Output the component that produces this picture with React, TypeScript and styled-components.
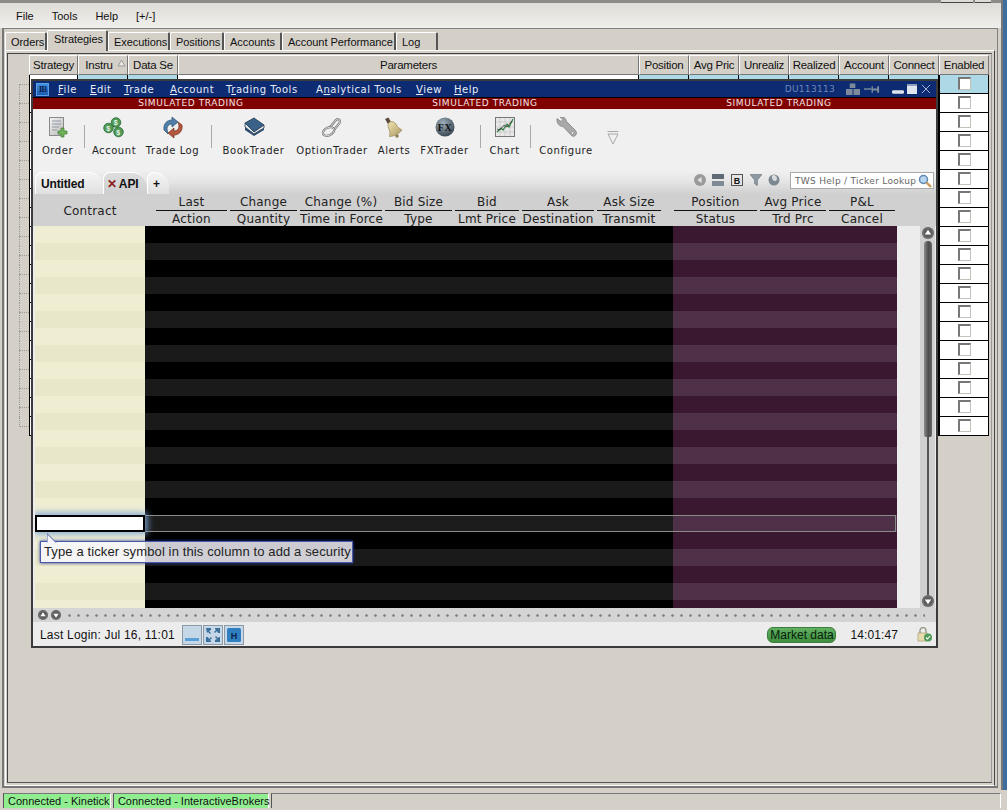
import React from "react";
import styled, { createGlobalStyle } from "styled-components";

const sans = `"Liberation Sans", Arial, sans-serif`;
const deja = `"DejaVu Sans", Verdana, sans-serif`;

const Global = createGlobalStyle`
  html, body { margin: 0; padding: 0; background: #d4d0c8; }
  * { box-sizing: border-box; }
`;

const Desktop = styled.div`
  position: relative;
  width: 1007px;
  height: 810px;
  overflow: hidden;
  display: flex;
  background: #d4d0c8;
  font-family: ${sans};
  font-size: 11px;
  color: #111;
`;
const Main = styled.div`
  width: 1001px;
  display: flex;
  flex-direction: column;
`;
const RightEdge = styled.div`
  width: 6px;
  height: 790px;
  border-left: 2px solid #77787a;
  background: #3f6d9e;
`;
const TopStrip = styled.div`
  height: 3px;
  background: #8d8b87;
  display: flex;
  justify-content: flex-end;
  gap: 2px;
  padding-right: 10px;
`;
const StripButton = styled.div<{ $w: number }>`
  width: ${(p) => p.$w}px;
  height: 3px;
  background: #dcdad4;
  border-bottom: 1px solid #444;
`;
const MenuBar = styled.div`
  height: 25px;
  display: flex;
  align-items: center;
  gap: 18px;
  padding-left: 16px;
  background: linear-gradient(#dedcd6, #f0efec);
  font-size: 11px;
`;
const Frame = styled.div`
  height: 760px;
  margin-left: 2px;
  width: 996px;
  border: 1px solid #808080;
  border-bottom: 2px solid #777;
  border-left: 2px solid #777;
  padding: 0 2px 0 1px;
  display: flex;
  flex-direction: column;
`;
const TabRow = styled.div`
  height: 21px;
  display: flex;
  align-items: flex-end;
  position: relative;
  z-index: 1;
`;
const Tab = styled.div<{ $w: number; $active?: boolean }>`
  width: ${(p) => p.$w}px;
  height: ${(p) => (p.$active ? 21 : 18)}px;
  margin-bottom: ${(p) => (p.$active ? -1 : 0)}px;
  padding: ${(p) => (p.$active ? "2px 0 0 6px" : "3px 0 0 5px")};
  background: #d4d0c8;
  border-top: 1px solid #fff;
  border-left: 1px solid #fff;
  border-right: 2px solid #555;
  border-radius: 2px 2px 0 0;
  font-size: 11px;
  letter-spacing: -0.05px;
  white-space: nowrap;
`;
const Panel = styled.div`
  flex: 1;
  border-top: 1px solid #fff;
  border-left: 1px solid #fff;
  border-right: 1px solid #444;
  border-bottom: 1px solid #fff;
  padding: 2px 2px 2px 1px;
  display: flex;
`;
const TablePane = styled.div`
  flex: 1;
  border: 1px solid #444;
  border-right-color: #999;
  border-bottom-color: #555;
  padding: 1px 0 0 0;
`;
const HeaderRow = styled.div`
  display: flex;
  height: 20px;
  padding-left: 21px;
`;
const HeadCell = styled.div<{ $w: number; $pr?: number }>`
  position: relative;
  width: ${(p) => p.$w}px;
  height: 20px;
  padding-right: ${(p) => p.$pr ?? 0}px;
  background: #d4d0c8;
  border-top: 1px solid #fff;
  border-left: 1px solid #fff;
  border-right: 1px solid #777;
  border-bottom: 1px solid #777;
  display: flex;
  align-items: center;
  justify-content: center;
  font-size: 11.5px;
  letter-spacing: -0.25px;
  white-space: nowrap;
`;
const SortMark = styled.svg`
  position: absolute;
  right: 1px;
  top: 3px;
`;
const TableRow = styled.div`
  display: flex;
  height: 19px;
`;
const TreeStub = styled.div<{ $first?: boolean; $last?: boolean }>`
  position: relative;
  width: 10px;
  margin-left: 11px;
  &::before {
    content: "";
    position: absolute;
    left: 0;
    top: ${(p) => (p.$first ? 9 : 0)}px;
    bottom: ${(p) => (p.$last ? 9 : 0)}px;
    border-left: 1px dotted #999;
  }
  &::after {
    content: "";
    position: absolute;
    left: 0;
    right: 0;
    top: 9px;
    border-top: 1px dotted #999;
  }
`;
const TableCell = styled.div<{ $w: number; $blue?: boolean }>`
  width: ${(p) => p.$w}px;
  height: 19px;
  background: ${(p) => (p.$blue ? "#add8e6" : "#fff")};
  border-right: 1px solid #000;
  border-bottom: 1px solid #000;
  &:nth-child(2) {
    border-left: 1px solid #000;
  }
`;
const EnabledCell = styled(TableCell)`
  display: flex;
  align-items: flex-start;
  justify-content: center;
  padding-top: 2px;
  border-left: 1px solid #000;
`;
const CheckBox = styled.div`
  width: 13px;
  height: 13px;
  background: #fff;
  border: 1px solid #c4c1ba;
  border-top: 2px solid #777;
  border-left: 2px solid #777;
`;

const StatusStrip = styled.div`
  height: 15px;
  margin-top: 5px;
  padding-left: 3px;
  display: flex;
  gap: 2px;
`;
const StatusCell = styled.div<{ $w: number; $on?: boolean }>`
  width: ${(p) => p.$w}px;
  background: ${(p) => (p.$on ? "#90ee90" : "#d4d0c8")};
  border-top: 1px solid #777;
  border-left: 1px solid #555;
  border-right: 1px solid #fff;
  padding: 0 0 0 4px;
  line-height: 14px;
  font-size: 11px;
  white-space: nowrap;
`;

/* floating TWS window */
const Window = styled.div`
  position: absolute;
  left: 31px;
  top: 79px;
  width: 907px;
  height: 569px;
  border: 2px solid #3b3b3b;
  background: #ececec;
  display: flex;
  flex-direction: column;
`;
const TitleBar = styled.div`
  height: 17px;
  border-bottom: 1px solid #000;
  background: #0c2b73;
  display: flex;
  align-items: center;
  padding: 0 5px 0 3px;
  color: #e8ecf6;
  font-family: ${deja};
  font-size: 10px;
  letter-spacing: 0.55px;
`;
const Logo = styled.div`
  width: 13px;
  height: 13px;
  margin-right: 9px;
  background: linear-gradient(#3f8fe0, #1c5cb0);
  border: 1px solid #5aa0e6;
  color: #0b2450;
  font: bold 9px "Liberation Serif", serif;
  letter-spacing: -1px;
  line-height: 11px;
  text-align: center;
`;
const TitleMenu = styled.div`
  display: flex;
  white-space: nowrap;
`;
const TitleItem = styled.span<{ $w: number }>`
  width: ${(p) => p.$w}px;
`;
const Mnemonic = styled.span`
  text-decoration: underline;
`;
const TitleRight = styled.div`
  margin-left: auto;
  display: flex;
  align-items: center;
`;
const AccountId = styled.span`
  color: #6f86b5;
  font-size: 9px;
  letter-spacing: 0.3px;
  margin-right: 11px;
`;
const WinIcon = styled.svg<{ $ml?: number; $mt?: number }>`
  display: block;
  margin-left: ${(p) => p.$ml ?? 0}px;
  margin-top: ${(p) => p.$mt ?? 0}px;
`;
const SimBar = styled.div`
  height: 11px;
  background: #800000;
  color: #f2e4e4;
  padding-left: 11px;
  display: grid;
  grid-template-columns: repeat(3, 294px);
  font-family: ${deja};
  font-size: 9px;
  letter-spacing: 0.6px;
  line-height: 10px;
  text-align: center;
`;
const Toolbar = styled.div`
  height: 61px;
  background: #f0f0f0;
  border-top: 1px solid #f6e8e8;
  display: flex;
  align-items: flex-start;
  gap: 10.5px;
  padding: 7px 0 0 9px;
`;
const ToolItem = styled.div<{ $w: number }>`
  width: ${(p) => p.$w}px;
  display: flex;
  flex-direction: column;
  align-items: center;
  height: 40px;
  font-family: ${deja};
  font-size: 10px;
  letter-spacing: 0.55px;
  color: #222;
  white-space: nowrap;
`;
const ToolIcon = styled.div`
  height: 26px;
  display: flex;
  align-items: flex-start;
  margin-bottom: 2px;
`;
const ToolSep = styled.div`
  width: 1px;
  height: 23px;
  margin: 8px -1px 0 0;
  background: #a9a9a9;
`;
const Chevron = styled.svg`
  margin: 14px 0 0 4px;
`;
const TabBar = styled.div`
  height: 24px;
  background: linear-gradient(#f0f0f0 0%, #e6e6e6 45%, #d0d0d0 100%);
  display: flex;
  align-items: flex-end;
  padding: 0 2px;
`;
const GridTab = styled.div<{ $w: number; $light?: boolean }>`
  width: ${(p) => p.$w}px;
  height: 22px;
  background: ${(p) =>
    p.$light ? "linear-gradient(#f4f4f4, #e0e0e0)" : "linear-gradient(#dedede, #cecece)"};
  border-top: 1px solid #fff;
  border-left: 1px solid #fff;
  border-radius: 7px 15px 0 0;
  font: bold 12px ${sans};
  letter-spacing: -0.15px;
  padding: 4px 0 0 5px;
  color: #111;
  white-space: nowrap;
`;
const RedX = styled.span`
  color: #8c2020;
  font-weight: bold;
  margin: 0 2px 0 -2px;
`;
const TabTools = styled.div`
  margin-left: auto;
  height: 24px;
  display: flex;
  align-items: flex-start;
  gap: 6px;
  padding-top: 4px;
`;
const TabToolIcon = styled.svg<{ $ml?: number }>`
  display: block;
  margin-left: ${(p) => p.$ml ?? 0}px;
`;
const SearchBox = styled.div`
  width: 144px;
  height: 17px;
  margin: -2px 0 0 4px;
  background: #fff;
  border: 1px solid #aaa;
  display: flex;
  align-items: center;
  justify-content: space-between;
  padding: 0 1px 0 4px;
  font-family: ${deja};
  font-size: 9px;
  letter-spacing: 0.3px;
  color: #666;
  white-space: nowrap;
`;
const GridHeader = styled.div`
  height: 32px;
  background: #d0d0d0;
  display: flex;
  font-family: ${deja};
  font-size: 12px;
  letter-spacing: 0.2px;
  color: #222;
`;
const ContractHead = styled.div`
  width: 115px;
  margin-right: 8px;
  display: flex;
  align-items: center;
  justify-content: center;
  padding: 2px 1px 0 0;
`;
const HeadColumn = styled.div<{ $w: number; $gap?: number }>`
  width: ${(p) => p.$w}px;
  margin-right: ${(p) => p.$gap ?? 3}px;
  display: flex;
  flex-direction: column;
  text-align: center;
  white-space: nowrap;
`;
const HeadTop = styled.div`
  height: 17px;
  line-height: 17px;
  border-bottom: 1px solid #111;
`;
const HeadBottom = styled.div`
  height: 15px;
  line-height: 17px;
`;
const GridBody = styled.div`
  position: relative;
  height: 382px;
  display: flex;
  padding-left: 2px;
  background: #ececec;
`;
const GridRows = styled.div`
  width: 862px;
  height: 382px;
  overflow: hidden;
`;
const GridRow = styled.div`
  display: flex;
  height: 17px;
  position: relative;
`;
const Cell = styled.div<{ $w: number; $c: string }>`
  width: ${(p) => p.$w}px;
  background: ${(p) => p.$c};
`;
const EditCell = styled.div`
  position: relative;
  z-index: 2;
  width: 110px;
  background: #fff;
  border: 2px solid #000;
  box-shadow: 0 0 7px 2px #7fa8d8;
`;
const FocusOutline = styled.div`
  position: absolute;
  z-index: 1;
  left: 110px;
  top: 0;
  width: 751px;
  height: 17px;
  border: 1px solid #8a8a8a;
  border-left: none;
`;
const Gutter = styled.div`
  width: 23px;
`;
const VScroll = styled.div`
  width: 15px;
  background: #d0d0d0;
  display: flex;
  flex-direction: column;
  align-items: center;
  padding: 1px 0;
`;
const Thumb = styled.div`
  width: 8px;
  height: 196px;
  margin: 2px 0 0;
  border-radius: 4px 4px 2px 2px;
  background: linear-gradient(90deg, #8a8a8a, #4c4c4c 55%, #666);
`;
const Rail = styled.div`
  flex: 1;
  width: 2px;
  background: #555;
`;
const ArrowDot = styled.svg`
  flex: none;
  display: block;
`;
const Tooltip = styled.div`
  position: absolute;
  z-index: 3;
  left: 7px;
  top: 315px;
  width: 313px;
  height: 22px;
  background: rgba(248, 248, 255, 0.82);
  border: 1px solid #4a5aa8;
  box-shadow: 0 0 3px #223399;
  font: 13px ${sans};
  letter-spacing: 0.12px;
  line-height: 20px;
  padding-left: 3px;
  color: #222;
  white-space: nowrap;
`;
const TooltipTail = styled.svg`
  position: absolute;
  left: 6px;
  top: -9px;
`;
const HScroll = styled.div`
  height: 14px;
  background: #d4d4d4;
  display: flex;
  align-items: center;
  padding-left: 5px;
  gap: 3px;
`;
const Dots = styled.div`
  width: 860px;
  height: 3px;
  margin-left: 1px;
  background: radial-gradient(circle, #888 1.2px, transparent 1.5px) 0 0 / 9px 3px repeat-x;
`;
const WinStatus = styled.div`
  height: 24px;
  background: #ececec;
  display: flex;
  align-items: center;
  padding: 1px 4px 0 7px;
  font-size: 12px;
  letter-spacing: 0.2px;
  color: #111;
  white-space: nowrap;
`;
const StatusButtons = styled.div`
  display: flex;
  gap: 1px;
  margin-left: 7px;
`;
const StatusButton = styled.div`
  width: 20px;
  height: 20px;
  background: #c6d8e8;
  border: 1px solid #8c9aa8;
  display: flex;
  align-items: center;
  justify-content: center;
`;
const MarketPill = styled.div`
  margin-left: auto;
  width: 69px;
  height: 16px;
  border-radius: 6px;
  background: linear-gradient(#62b062, #3f8f3f);
  border: 1px solid #3c7c3c;
  font-size: 12px;
  line-height: 14px;
  letter-spacing: 0;
  text-align: center;
  color: #06200a;
`;
const Clock = styled.div`
  margin: 0 19px 0 14px;
  letter-spacing: 0.1px;
`;

const Row = ({ idx }: { idx: number }) => {
  const light = idx % 2 === 1;
  if (idx === 17) {
    return (
      <GridRow>
        <EditCell />
        <Cell $w={528} $c="#1c1c1c" />
        <Cell $w={224} $c="#4e3048" />
        <FocusOutline />
      </GridRow>
    );
  }
  return (
    <GridRow>
      <Cell $w={110} $c={light ? "#e9e7c9" : "#f0eed2"} />
      <Cell $w={528} $c={light ? "#1a1a1a" : "#000"} />
      <Cell $w={224} $c={light ? "#4e3048" : "#3a1830"} />
    </GridRow>
  );
};

const Dot = ({ up, size = 12 }: { up?: boolean; size?: number }) => (
  <ArrowDot width={size} height={size} viewBox="0 0 12 12">
    <circle cx="6" cy="6" r="6" fill="#5c5c5c" />
    <circle cx="6" cy="6" r="5" fill="none" stroke="#8a8a8a" strokeWidth="0.6" />
    {up ? <path d="M6 2.8 9.2 7.6H2.8z" fill="#fff" /> : <path d="M6 9.2 2.8 4.4h6.4z" fill="#fff" />}
  </ArrowDot>
);

const OrderIcon = () => (
  <svg width="20" height="22" viewBox="0 0 20 22">
    <defs>
      <linearGradient id="doc" x1="0" y1="0" x2="1" y2="1">
        <stop offset="0" stopColor="#f4f4f4" />
        <stop offset="1" stopColor="#b8b8b8" />
      </linearGradient>
    </defs>
    <rect x="1.5" y="0.5" width="14" height="18" fill="url(#doc)" stroke="#8a8a8a" />
    <path d="M4 4h9M4 7h9M4 10h7M4 13h5" stroke="#8f9aa6" strokeWidth="1.1" />
    <path d="M13 11h3v3h3v3h-3v3h-3v-3h-3v-3h3z" fill="#6fb45a" stroke="#3f7d34" strokeWidth="0.7" />
  </svg>
);
const Coin = ({ cx, cy }: { cx: number; cy: number }) => (
  <g>
    <circle cx={cx} cy={cy} r="4.8" fill="#4f9a56" stroke="#2c6a36" strokeWidth="0.8" />
    <text x={cx} y={cy + 2.6} textAnchor="middle" fontSize="7" fontWeight="bold" fill="#e8f4e8" fontFamily="Liberation Sans">$</text>
  </g>
);
const AccountIcon = () => (
  <svg width="22" height="21" viewBox="0 0 22 21">
    <Coin cx={13} cy={5.5} />
    <Coin cx={5.5} cy={11} />
    <Coin cx={15.5} cy={15} />
  </svg>
);
const TradeLogIcon = () => (
  <svg width="24" height="22" viewBox="0 0 24 22">
    <path d="M3 13C2 7 6 3 11 3V0l6 5-6 5V7C8 7 6 9 6 12l1 5z" fill="#4f7fa8" stroke="#2d4f70" strokeWidth="0.7" />
    <path d="M21 8c1 6-3 10-8 10v3l-6-5 6-5v3c3 0 5-2 5-5l-1-4z" fill="#b5573f" stroke="#6f3020" strokeWidth="0.7" />
  </svg>
);
const BookIcon = () => (
  <svg width="22" height="20" viewBox="0 0 22 20">
    <path d="M2 6 11 1l10 7-10 7z" fill="#3a6288" stroke="#1c3550" strokeWidth="0.8" />
    <path d="M2 6v4l9 7 10-6V8l-10 7z" fill="#e8e8e8" stroke="#1c3550" strokeWidth="0.8" />
    <path d="M2 10v3l9 6 10-6v-2l-10 6z" fill="#2a4a6c" />
  </svg>
);
const ChainIcon = () => (
  <svg width="22" height="21" viewBox="0 0 22 21" fill="none">
    <path d="M9 10l6-7c2-2 5 0 3.500 3L13 13" stroke="#777" strokeWidth="2.2" />
    <path d="M9 10l6-7c2-2 5 0 3.500 3L13 13" stroke="#e4e4e4" strokeWidth="0.9" />
    <ellipse cx="7.500" cy="14.500" rx="6" ry="3.800" stroke="#777" strokeWidth="2.200" transform="rotate(-25 7.500 14.500)" />
    <ellipse cx="7.500" cy="14.500" rx="6" ry="3.800" stroke="#e4e4e4" strokeWidth="0.800" transform="rotate(-25 7.500 14.500)" />
  </svg>
);
const BellIcon = () => (
  <svg width="20" height="22" viewBox="0 0 20 22">
    <defs>
      <linearGradient id="bell" x1="0" y1="0" x2="1" y2="1">
        <stop offset="0" stopColor="#f2e6b0" />
        <stop offset="1" stopColor="#a89660" />
      </linearGradient>
    </defs>
    <path d="M1 2 4.500 0.500 7 5 4 7z" fill="#5c4a3a" />
    <path d="M5 5.500C8 3.500 11 5 12.500 8c1 2 3.500 4 5.500 5-2.500 3.500-8 6.500-12.500 6.500C6.500 16 5.500 13 4.500 11 3.800 9 3.800 7 5 5.500z" fill="url(#bell)" stroke="#8a7a4c" strokeWidth="0.6" />
    <circle cx="13" cy="19" r="1.700" fill="#8a7a4c" />
  </svg>
);
const FxIcon = () => (
  <svg width="20" height="20" viewBox="0 0 20 20">
    <defs>
      <radialGradient id="fx" cx="0.4" cy="0.3" r="0.8">
        <stop offset="0" stopColor="#9fb0bc" />
        <stop offset="1" stopColor="#2c3a44" />
      </radialGradient>
    </defs>
    <circle cx="10" cy="10" r="9.500" fill="url(#fx)" />
    <text x="10" y="13.500" textAnchor="middle" fontSize="10" fontWeight="bold" fontFamily="Liberation Serif" fill="#111">FX</text>
  </svg>
);
const ChartIcon = () => (
  <svg width="20" height="20" viewBox="0 0 20 20">
    <rect x="0.500" y="0.500" width="19" height="19" fill="#e8e8e8" stroke="#777" />
    <path d="M5 1v18M10 1v18M15 1v18M1 5h18M1 10h18M1 15h18" stroke="#c4c4c4" strokeWidth="0.7" />
    <path d="M2 15l4-4 2 2 4-6 2 3 4-8" fill="none" stroke="#2f7f3f" strokeWidth="1.200" />
    <path d="M2 12l3 1 4-5 3 2 5-6" fill="none" stroke="#333" strokeWidth="0.800" />
  </svg>
);
const WrenchIcon = () => (
  <svg width="21" height="21" viewBox="0 0 21 21">
    <path d="M1 1.500 5 4.500l2-2L4 0c3-.8 6 1 6.500 4.500L19 13c1.800 1.800 1.800 3.500.8 5s-3.500 2-5-.3L7 9.500C3.500 9.500.3 6.500 1 1.500z" fill="#a9a9a9" stroke="#777" strokeWidth="0.7" />
    <circle cx="16.500" cy="16" r="1.400" fill="#e6e6e6" stroke="#777" strokeWidth="0.500" />
  </svg>
);

const heads: [string, string, number, number?][] = [
  ["Last", "Action", 71],
  ["Change", "Quantity", 67],
  ["Change (%)", "Time in Force", 82],
  ["Bid Size", "Type", 67],
  ["Bid", "Lmt Price", 64],
  ["Ask", "Destination", 72],
  ["Ask Size", "Transmit", 64, 13],
  ["Position", "Status", 83],
  ["Avg Price", "Trd Prc", 66],
  ["P&L", "Cancel", 66],
];
const strategyHeads: [string, number][] = [
  ["Strategy", 49],
  ["Instru", 50],
  ["Data Se", 50],
  ["Parameters", 461],
  ["Position", 50],
  ["Avg Pric", 50],
  ["Unrealiz", 50],
  ["Realized", 50],
  ["Account", 50],
  ["Connect", 50],
  ["Enabled", 50],
];
const blueCols = new Set([1, 2, 4, 5, 6, 7, 8, 9]);
const tools: [string, number, React.ReactNode, boolean?][] = [
  ["Order", 31, <OrderIcon />, true],
  ["Account", 40, <AccountIcon />],
  ["Trade Log", 56, <TradeLogIcon />, true],
  ["BookTrader", 64, <BookIcon />],
  ["OptionTrader", 72, <ChainIcon />],
  ["Alerts", 31, <BellIcon />],
  ["FXTrader", 49, <FxIcon />, true],
  ["Chart", 29, <ChartIcon />, true],
  ["Configure", 52, <WrenchIcon />],
];

export default function App() {
  return (
    <>
      <Global />
      <Desktop>
        <Main>
          <TopStrip>
            <StripButton $w={32} />
            <StripButton $w={16} />
          </TopStrip>
          <MenuBar>
            <span>File</span>
            <span>Tools</span>
            <span>Help</span>
            <span>[+/-]</span>
          </MenuBar>
          <Frame>
            <TabRow>
              <Tab $w={42}>Orders</Tab>
              <Tab $w={61} $active>Strategies</Tab>
              <Tab $w={62}>Executions</Tab>
              <Tab $w={54}>Positions</Tab>
              <Tab $w={58}>Accounts</Tab>
              <Tab $w={114}>Account Performance</Tab>
              <Tab $w={42}>Log</Tab>
            </TabRow>
            <Panel>
              <TablePane>
                <HeaderRow>
                  {strategyHeads.map(([t, w]) => (
                    <HeadCell key={t + w} $w={w} $pr={t === "Instru" ? 8 : 0}>
                      {t}
                      {t === "Instru" && (
                        <SortMark width="9" height="8" viewBox="0 0 9 8">
                          <path d="M4.500 1 8 7H1z" fill="#e8e6e0" stroke="#8a8a8a" strokeWidth="0.8" />
                        </SortMark>
                      )}
                    </HeadCell>
                  ))}
                </HeaderRow>
                {Array.from({ length: 19 }).map((_, r) => (
                  <TableRow key={r}>
                    <TreeStub $first={r === 0} $last={r === 18} />
                    {strategyHeads.slice(0, 10).map(([t, w], c) => (
                      <TableCell key={t + w} $w={w} $blue={r === 0 && blueCols.has(c)} />
                    ))}
                    <EnabledCell $w={50} $blue={r === 0}>
                      <CheckBox />
                    </EnabledCell>
                  </TableRow>
                ))}
              </TablePane>
            </Panel>
          </Frame>
          <StatusStrip>
            <StatusCell $w={108} $on>Connected - Kinetick</StatusCell>
            <StatusCell $w={156} $on>Connected - InteractiveBrokers</StatusCell>
            <StatusCell $w={731} />
          </StatusStrip>
        </Main>
        <RightEdge />

        <Window>
          <TitleBar>
            <Logo>IB</Logo>
            <TitleMenu>
              <TitleItem $w={32}><Mnemonic>F</Mnemonic>ile</TitleItem>
              <TitleItem $w={34}><Mnemonic>E</Mnemonic>dit</TitleItem>
              <TitleItem $w={46}><Mnemonic>T</Mnemonic>rade</TitleItem>
              <TitleItem $w={56}><Mnemonic>A</Mnemonic>ccount</TitleItem>
              <TitleItem $w={90}>T<Mnemonic>r</Mnemonic>ading Tools</TitleItem>
              <TitleItem $w={100}>A<Mnemonic>n</Mnemonic>alytical Tools</TitleItem>
              <TitleItem $w={38}><Mnemonic>V</Mnemonic>iew</TitleItem>
              <TitleItem $w={30}><Mnemonic>H</Mnemonic>elp</TitleItem>
            </TitleMenu>
            <TitleRight>
              <AccountId>DU113113</AccountId>
              <WinIcon width="14" height="13" viewBox="0 0 15 13">
                <path d="M4 0h6v5H4zM0 6h7v6.500H0zM8 6h7v6.500H8z" fill="#7d8a9c" />
              </WinIcon>
              <WinIcon $ml={4} width="16" height="9" viewBox="0 0 17 9">
                <path d="M0 4h8" stroke="#7d8a9c" strokeWidth="1.500" />
                <path d="M8 1v7h1.500V5.500H14V8h2V1h-2v2.500H9.500V1z" fill="#7d8a9c" />
              </WinIcon>
              <WinIcon $ml={12} $mt={6} width="12" height="6" viewBox="0 0 13 6">
                <rect x="0" y="1" width="13" height="4" rx="1.500" fill="#dfe5ee" />
              </WinIcon>
              <WinIcon $ml={3} width="10" height="10" viewBox="0 0 10 10">
                <rect width="10" height="10" fill="#dfe5ee" />
                <rect y="0" width="10" height="2" fill="#8fa0bc" />
              </WinIcon>
              <WinIcon $ml={4} width="10" height="10" viewBox="0 0 11 11">
                <path d="M1 1l9 9M10 1l-9 9" stroke="#b4c0d4" strokeWidth="1" />
              </WinIcon>
            </TitleRight>
          </TitleBar>
          <SimBar>
            <span>SIMULATED TRADING</span>
            <span>SIMULATED TRADING</span>
            <span>SIMULATED TRADING</span>
          </SimBar>
          <Toolbar>
            {tools.map(([label, w, icon, sep]) => (
              <React.Fragment key={label}>
                <ToolItem $w={w}>
                  <ToolIcon>{icon}</ToolIcon>
                  {label}
                </ToolItem>
                {sep && <ToolSep />}
              </React.Fragment>
            ))}
            <Chevron width="12" height="14" viewBox="0 0 12 14" fill="none">
              <path d="M0.500 0.500h11" stroke="#a8a8a8" />
              <path d="M1 3h10L6 13z" stroke="#a8a8a8" strokeWidth="1" />
            </Chevron>
          </Toolbar>
          <TabBar>
            <GridTab $w={68} $light>Untitled</GridTab>
            <GridTab $w={44}><RedX>✕</RedX>API</GridTab>
            <GridTab $w={22} $light>+</GridTab>
            <TabTools>
              <TabToolIcon width="12" height="12" viewBox="0 0 12 12">
                <circle cx="6" cy="6" r="6" fill="#9a9a9a" />
                <path d="M7.500 3v6L3.500 6z" fill="#e8e8e8" />
              </TabToolIcon>
              <TabToolIcon width="12" height="12" viewBox="0 0 12 12">
                <rect width="12" height="5" fill="#5f6a74" />
                <rect y="5" width="12" height="2" fill="#e8e8e8" />
                <rect y="7" width="12" height="5" fill="#7f8c96" />
              </TabToolIcon>
              <TabToolIcon $ml={1} width="12" height="12" viewBox="0 0 12 12">
                <rect x="0.500" y="0.500" width="11" height="11" fill="#e4e4e4" stroke="#555" />
                <text x="6" y="9.500" textAnchor="middle" fontSize="9" fontWeight="bold" fontFamily="Liberation Sans" fill="#111">B</text>
              </TabToolIcon>
              <TabToolIcon $ml={1} width="12" height="12" viewBox="0 0 13 12">
                <path d="M0 0h13L8 6v6L5 10V6z" fill="#8d9aa4" stroke="#5c666e" strokeWidth="0.600" />
              </TabToolIcon>
              <TabToolIcon width="12" height="12" viewBox="0 0 12 12">
                <circle cx="6" cy="6" r="5.500" fill="#7d8890" />
                <path d="M5 1c3 0 4 2 4 4S6 8 5 6 3 3 5 1z" fill="#d8dcde" />
              </TabToolIcon>
              <SearchBox>
                TWS Help / Ticker Lookup
                <svg width="14" height="14" viewBox="0 0 14 14" fill="none">
                  <circle cx="5.500" cy="5.500" r="4" fill="#b8d6ee" stroke="#5f88b0" strokeWidth="1.500" />
                  <path d="M8.500 8.500 13 13" stroke="#c99a58" strokeWidth="2.400" />
                </svg>
              </SearchBox>
            </TabTools>
          </TabBar>
          <GridHeader>
            <ContractHead>Contract</ContractHead>
            {heads.map(([top, bottom, w, gap]) => (
              <HeadColumn key={bottom} $w={w} $gap={gap}>
                <HeadTop>{top}</HeadTop>
                <HeadBottom>{bottom}</HeadBottom>
              </HeadColumn>
            ))}
          </GridHeader>
          <GridBody>
            <GridRows>
              {Array.from({ length: 23 }).map((_, i) => (
                <Row key={i} idx={i} />
              ))}
            </GridRows>
            <Gutter />
            <VScroll>
              <Dot up />
              <Thumb />
              <Rail />
              <Dot />
            </VScroll>
            <Tooltip>
              <TooltipTail width="10" height="10" viewBox="0 0 10 10">
                <path d="M0 9.500V0.500L9 9.500" fill="#f4f4ff" stroke="#4a5aa8" />
              </TooltipTail>
              Type a ticker symbol in this column to add a security
            </Tooltip>
          </GridBody>
          <HScroll>
            <Dot up size={10} />
            <Dot size={10} />
            <Dots />
          </HScroll>
          <WinStatus>
            Last Login: Jul 16, 11:01
            <StatusButtons>
              <StatusButton>
                <svg width="14" height="14" viewBox="0 0 14 14">
                  <rect x="0" y="10" width="14" height="3" fill="#5aa0d8" />
                </svg>
              </StatusButton>
              <StatusButton>
                <svg width="16" height="16" viewBox="0 0 16 16">
                  <path d="M1 1h5v2L4 4l2 2-1 1-2-2-1 1zM15 1v5h-2l-1-2-2 2-1-1 2-2-1-1V1zM1 15v-5h2l1 2 2-2 1 1-2 2 1 1v1zM15 15h-5v-2l2-1-2-2 1-1 2 2 1-1h1z" fill="#3a6f9a" />
                </svg>
              </StatusButton>
              <StatusButton>
                <svg width="14" height="14" viewBox="0 0 14 14">
                  <rect width="14" height="14" rx="1.500" fill="#2f7fc0" />
                  <text x="7" y="10.500" textAnchor="middle" fontSize="9" fontWeight="bold" fontFamily="Liberation Sans" fill="#0b2450">H</text>
                </svg>
              </StatusButton>
            </StatusButtons>
            <MarketPill>Market data</MarketPill>
            <Clock>14:01:47</Clock>
            <svg width="15" height="15" viewBox="0 0 15 15" fill="none">
              <path d="M3 6V3.500a3 3 0 0 1 6 0V6" stroke="#9a9a8a" strokeWidth="1.400" />
              <rect x="1" y="6" width="9" height="8" fill="#e8dcae" stroke="#a89a70" strokeWidth="0.700" />
              <circle cx="11" cy="10.500" r="4" fill="#4f9a56" />
              <path d="M9 10.500l1.500 1.500 2.500-3" stroke="#fff" strokeWidth="1.100" />
            </svg>
          </WinStatus>
        </Window>
      </Desktop>
    </>
  );
}
